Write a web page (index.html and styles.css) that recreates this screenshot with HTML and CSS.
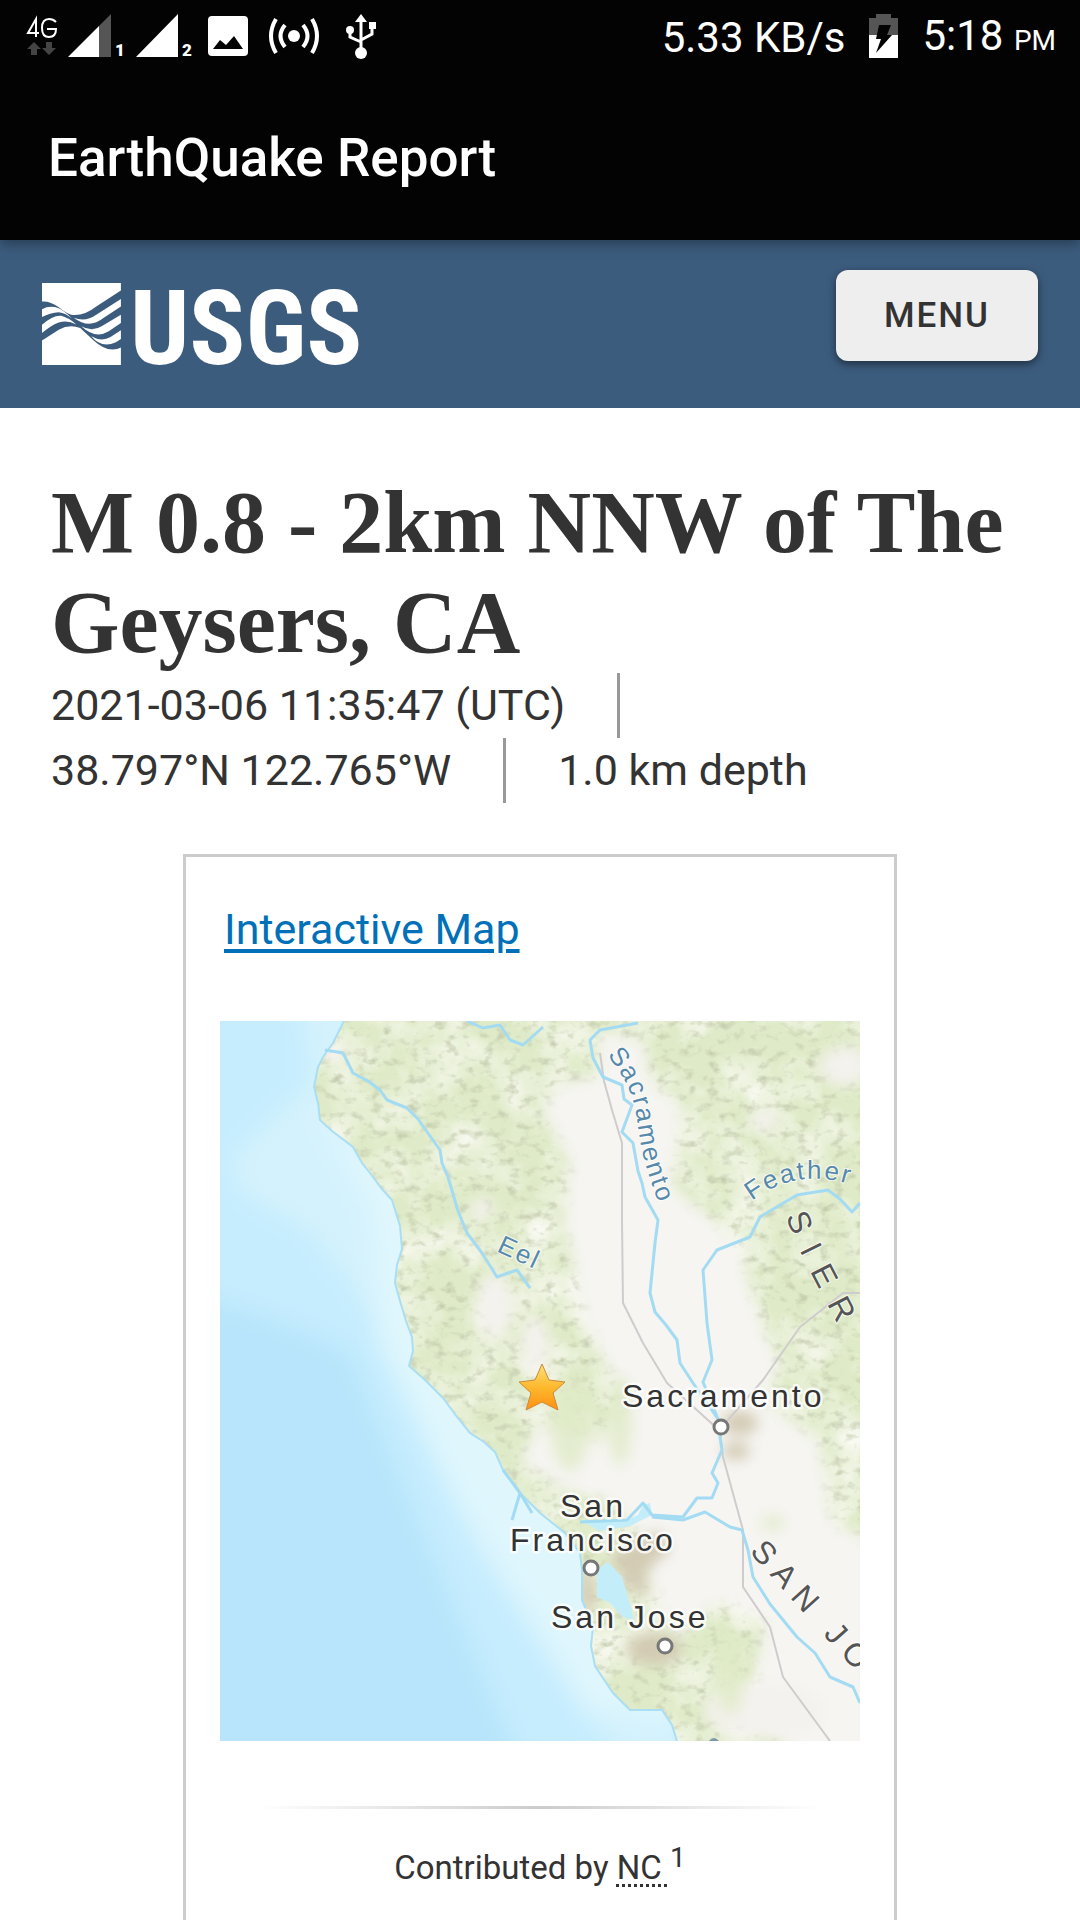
FILE: index.html
```html
<!DOCTYPE html>
<html lang="en">
<head>
<meta charset="utf-8">
<meta name="viewport" content="width=device-width, initial-scale=1">
<title>EarthQuake Report</title>
<link rel="stylesheet" href="styles.css">
</head>
<body>
<div class="app-top">
  <div class="status-bar">
    <div class="status-group">
      <svg class="status-icons" width="380" height="48" viewBox="24 12 380 48" role="img" aria-label="Phone status">
        <g fill="none" stroke="#fff" stroke-width="2">
          <path d="M36 37V19L28 33H39M56 22Q53 19 49 19Q42 19 42 28Q42 37 49 37Q56 37 56 29H47"/>
        </g>
        <path fill="#444" d="M34 42L41 49H37V55H31V49H27ZM49 55L42 48H46V42H52V48H56Z"/>
        <path fill="#555" d="M99 26L111 14V57H99Z"/>
        <path fill="#fff" d="M68 57L99 26V57ZM136 57L178 14V57Z"/>
        <text class="sim" x="115" y="56">1</text>
        <text class="sim" x="182" y="56">2</text>
        <rect x="208" y="16" width="40" height="40" rx="4" fill="#fff"/>
        <path fill="#030303" d="M213 49L220 40L226 45L234 36L243 49Z"/>
        <circle cx="294" cy="36" r="6" fill="#fff"/>
        <path d="M285 25Q276 36 285 47M303 25Q312 36 303 47M276 19Q266 36 276 53M312 19Q322 36 312 53" fill="none" stroke="#fff" stroke-width="4"/>
        <g fill="none" stroke="#fff" stroke-width="3">
          <path d="M361 20V52M350 31V37L361 42M372 27V34L361 40"/>
        </g>
        <path fill="#fff" d="M361 14L367 22H355ZM369 22H376V29H369Z"/>
        <circle cx="350" cy="30" r="4" fill="#fff"/>
        <circle cx="361" cy="53" r="6" fill="#fff"/>
      </svg>
    </div>
    <div class="status-group status-right">
      <span>5.33 KB/s</span>
      <svg width="29" height="44" viewBox="0 0 29 44" role="img" aria-label="Charging">
        <path fill="#555" d="M7 0H22V4H29V21H0V4H7Z"/>
        <path fill="#fff" d="M0 21H29V44H0Z"/>
        <path fill="#030303" d="M10 11H22L18 21H23L7 39L12 25H7Z"/>
      </svg>
      <span>5:18 <small class="meridiem">PM</small></span>
    </div>
  </div>
  <header class="app-bar"><div class="app-title">EarthQuake Report</div></header>
</div>

<div class="site-header">
  <a class="logo" href="#" aria-label="USGS">
    <svg width="340" height="82" viewBox="0 0 340 82">
      <g fill="#fff" transform="scale(.357 .331) translate(-118 -549)">
        <path d="M118 549H339V572L270 620Q235 650 200 645Q185 640 165 622Q140 603 118 605Z"/>
        <path d="M118 628Q140 615 165 625Q180 632 202 656Q185 640 165 637Q140 638 118 652Z"/>
        <path d="M118 675Q150 645 172 648Q195 655 214 674Q190 660 165 668Q145 675 118 700Z"/>
        <path d="M118 723L165 690Q195 672 225 685Q245 705 262 722Q290 750 315 750Q330 750 339 744V797H118Z"/>
        <path d="M339 597V620L290 655Q250 690 207 654Q240 668 270 645Z"/>
        <path d="M339 645V670L305 695Q268 720 228 680Q258 698 285 680Z"/>
        <path d="M339 692V718L325 728Q285 748 256 710Q285 728 310 712Z"/>
      </g>
      <text class="wordmark" x="88" y="81">USGS</text>
    </svg>
  </a>
  <button class="menu-button" type="button">MENU</button>
</div>

<main class="event">
  <h1 class="event-title">M 0.8 - 2km NNW of The Geysers, CA</h1>
  <ul class="event-facts">
    <li>2021-03-06 11:35:47 (UTC)</li>
    <li>38.797°N 122.765°W</li>
    <li>1.0 km depth</li>
  </ul>

  <section class="card">
    <h2 class="card-title"><a href="#">Interactive Map</a></h2>
    <svg class="map" viewBox="0 0 640 720" role="img" aria-label="Map of Northern California with the epicenter">
      <defs>
        <filter id="soft" x="-20%" y="-20%" width="140%" height="140%"><feGaussianBlur stdDeviation="12"/></filter>
        <filter id="shore" x="-20%" y="-20%" width="140%" height="140%"><feGaussianBlur stdDeviation="7"/></filter>
        <filter id="relief" x="0" y="0" width="100%" height="100%">
          <feTurbulence type="fractalNoise" baseFrequency="0.08 0.11" numOctaves="3" seed="8"/>
          <feColorMatrix values="0 0 0 0 .55  0 0 0 0 .60  0 0 0 0 .42  2.6 0 0 0 -1.35" result="n"/>
          <feComposite in="n" in2="SourceGraphic" operator="in"/>
        </filter>
        <filter id="lights" x="0" y="0" width="100%" height="100%">
          <feTurbulence type="fractalNoise" baseFrequency="0.02 0.02" numOctaves="4" seed="21"/>
          <feColorMatrix values="0 0 0 0 .96  0 0 0 0 .96  0 0 0 0 .91  0 2 0 0 -.8" result="n"/>
          <feComposite in="n" in2="SourceGraphic" operator="in"/>
        </filter>
        <linearGradient id="gold" x1="0" y1="0" x2="0" y2="1">
          <stop offset="0" stop-color="#ffe07a"/><stop offset=".5" stop-color="#fdb92e"/><stop offset="1" stop-color="#ff8f12"/>
        </linearGradient>
        <path id="coast" d="M128 -10L123 2L113 22L103 36L98 46L94 66L98 82L100 99L112 110L133 126L142 142L150 152L162 168L172 179L176 192L180 205L182 228L177 244L175 262L180 280L186 300L192 316L193 330L189 345L204 358L223 377L237 396L250 412L264 421L275 431L283 449L300 472L320 492L345 512L360 532L362 549V579L373 606L371 625L375 645L393 672L410 689L442 689L452 704L460 730H650V-10Z"/>
        <clipPath id="land"><use href="#coast"/></clipPath>
        <path id="sacramento-line" d="M387 34C404 55 414 72 418 105C422 140 431 160 442 192"/>
        <path id="feather-line" d="M532 180Q576 146 632 164"/>
        <path id="sierra-line" d="M566 195C576 226 590 250 622 312"/>
        <path id="san-joaquin-line" d="M529 531L700 722"/>
      </defs>
      <rect width="640" height="720" fill="#b8e5fb"/>
      <path filter="url(#soft)" fill="#c6edfe" d="M-30 -30H200V360L420 740H300L200 500L130 330L60 300L-30 270Z"/>
      <path filter="url(#soft)" fill="#d4f2fd" d="M80 -30H200L480 740H400L260 530L160 300L90 210L20 170L10 140L90 60Z"/>
      <path filter="url(#soft)" fill="#dff6fd" d="M90 80L150 190L160 320L240 480L370 690L460 700V400L180 160Z"/>
      <g clip-path="url(#land)">
        <rect width="640" height="720" fill="#dfebc8"/>
        <rect width="640" height="720" filter="url(#lights)"/>
        <rect width="640" height="720" filter="url(#relief)"/>
        <path filter="url(#shore)" fill="#f6f5f2" d="M378 10L425 20L430 60L462 85L452 165L500 205L520 230L540 300L560 345L545 380L600 420L612 500L650 520V740H585L530 690L545 600L500 580L455 620L430 560L420 515L390 480L345 470L300 440L320 400L380 420L405 380L365 300L345 200L350 140L322 90L340 62L380 55Z"/>
        <g filter="url(#shore)" fill="#f4f2ee">
          <ellipse cx="275" cy="285" rx="18" ry="34"/><ellipse cx="315" cy="325" rx="14" ry="30"/><ellipse cx="545" cy="100" rx="15" ry="10"/><ellipse cx="625" cy="45" rx="24" ry="20"/><ellipse cx="115" cy="32" rx="12" ry="8"/><ellipse cx="545" cy="690" rx="60" ry="28"/><ellipse cx="262" cy="188" rx="12" ry="10"/>
        </g>
        <g filter="url(#shore)" fill="#dfeac6" opacity=".8">
          <ellipse cx="350" cy="400" rx="20" ry="50"/><ellipse cx="400" cy="400" rx="12" ry="45"/><ellipse cx="510" cy="650" rx="14" ry="45"/><ellipse cx="553" cy="502" rx="12" ry="8"/>
        </g>
        <g filter="url(#shore)" fill="#d3cbb4">
          <ellipse cx="520" cy="402" rx="18" ry="12"/><ellipse cx="516" cy="430" rx="14" ry="9"/><ellipse cx="367" cy="570" rx="8" ry="24"/><path d="M388 535L440 510L450 530L425 550L430 575L412 572Z"/><ellipse cx="434" cy="628" rx="28" ry="16"/>
        </g>
        <path fill="#c4edfa" d="M377 549L388 541L402 556L412 590L414 600L403 596L390 582L377 576ZM360 499H407L418 494L423 484L430 482L432 494L410 505L380 510Z"/>
      </g>
      <use href="#coast" fill="none" stroke="#a9def5" stroke-width="2"/>
      <g class="road">
        <path d="M380 32L384 60L392 89L402 122V200L403 282L423 322L447 362L500 410L503 436L523 509V566L550 606L563 656L610 720"/>
        <path d="M500 408L543 359L580 306L623 272H640"/>
      </g>
      <g class="river">
        <path d="M105 29L123 32L133 52L148 60L160 69L167 79L187 87L198 98L205 108L220 129L222 142L228 156L238 190L247 212L262 232L277 256L297 249L310 267"/>
        <path d="M247 0L263 7L280 4L290 19L303 24L323 6"/>
        <path d="M418 2L380 9L370 19L373 37L383 56L402 64L404 78L412 84L402 111L413 122L418 150L422 162L425 176L438 199L435 222L430 272L435 291L446 304L457 319L460 342L473 362L498 398L500 416L502 429L492 452L498 462L492 477L477 477L463 496L432 494L423 482L407 499L360 501"/>
        <path d="M640 182L632 191L620 178L608 169L577 174L540 196L530 216L497 229L483 249L487 302L492 339L483 361L498 398"/>
        <path d="M432 496L463 499L485 491L510 506L522 509L528 529L533 556L550 583L577 616L595 632L610 656L633 666L640 682"/>
        <path d="M283 449L300 472L292 499M300 472L312 492"/>
      </g>
      <g class="water-label">
        <text><textPath href="#sacramento-line">Sacramento</textPath></text>
        <text><textPath href="#feather-line">Feather</textPath></text>
        <text transform="translate(276 230) rotate(25)">Eel</text>
      </g>
      <g class="range-label">
        <text class="sierra"><textPath href="#sierra-line">SIER</textPath></text>
        <text><textPath href="#san-joaquin-line">SAN JO</textPath></text>
      </g>
      <g class="city-label">
        <text x="402" y="386">Sacramento</text>
        <text x="340" y="496">San</text>
        <text x="290" y="530">Francisco</text>
        <text x="331" y="607">San Jose</text>
      </g>
      <g fill="#fff" stroke="#777" stroke-width="3">
        <circle cx="501" cy="406" r="7"/><circle cx="371" cy="547" r="7"/><circle cx="445" cy="625" r="7"/>
      </g>
      <path d="M489 720Q494 714 499 720Z" fill="#7e9aaa"/>
      <path fill="url(#gold)" stroke="#c98a3a" stroke-width="1" stroke-linejoin="round" d="M322 343L329 359L345 361L333 372L338 389L322 381L306 389L311 372L299 361L315 359Z"/>
    </svg>
    <hr class="divider">
    <p class="credit">Contributed by <abbr title="Northern California">NC </abbr><sup>1</sup></p>
  </section>
</main>
</body>
</html>
```
FILE: styles.css
```css
* {
  box-sizing: border-box;
}

body {
  margin: 0;
  min-height: 100vh;
  display: flex;
  flex-direction: column;
  background: #fff;
  color: #333;
  font-family: Roboto, "Liberation Sans", sans-serif;
  font-size: 43px;
  line-height: 65px;
}

.app-top {
  position: relative;
  background: #030303;
  color: #fff;
  box-shadow: 0 4px 12px rgba(0, 0, 0, 0.35);
}

.status-bar {
  height: 72px;
  padding: 0 24px;
  display: flex;
  align-items: center;
  justify-content: space-between;
  font-size: 42px;
}

.status-group {
  display: flex;
  align-items: center;
}

.status-right {
  gap: 24px;
}

.status-right span {
  line-height: 48px;
  padding-top: 4px;
}

.meridiem {
  font-size: 28px;
}

.sim {
  fill: #fff;
  font-size: 17px;
  font-weight: 900;
}

.app-bar {
  height: 168px;
  padding: 54px 48px;
  display: flex;
}

.app-title {
  font-size: 53px;
  font-weight: 500;
  line-height: 64px;
}

.site-header {
  background: #3c5c7e;
  height: 168px;
  padding: 30px 42px 47px;
  display: flex;
  align-items: center;
  justify-content: space-between;
}

.logo {
  display: block;
  padding-top: 17px;
}

.logo svg {
  display: block;
}

.wordmark {
  fill: #fff;
  font-family: "Liberation Sans Narrow", "Roboto Condensed", "Liberation Sans", sans-serif;
  font-size: 104px;
  font-weight: 700;
}

.menu-button {
  height: 91px;
  padding: 0 48px;
  border: 0;
  border-radius: 12px;
  background: #eee;
  color: #333;
  font: 500 35px/91px Roboto, "Liberation Sans", sans-serif;
  letter-spacing: 2px;
  box-shadow: 0 3px 8px rgba(0, 0, 0, 0.5);
}

.event {
  flex: 1;
  display: flex;
  flex-direction: column;
  padding: 65px 51px 0;
}

.event-title {
  margin: 0;
  font-family: "Liberation Serif", serif;
  font-size: 88px;
  font-weight: 700;
  line-height: 100px;
}

.event-facts {
  list-style: none;
  margin: 0 0 51px;
  padding: 0;
  display: flex;
  flex-wrap: wrap;
  column-gap: 52px;
}

.event-facts li:not(:last-child) {
  padding-right: 52px;
  border-right: 3px solid #999;
}

.card {
  flex: 1;
  width: 100%;
  max-width: 714px;
  margin: 0 auto;
  padding: 40px 34px 0;
  border: 3px solid #ccc;
  border-bottom: 0;
}

.card-title {
  margin: 0 4px 59px;
  font-size: 43px;
  font-weight: 400;
  line-height: 65px;
}

.card-title a {
  color: #0071b8;
  text-underline-offset: 5px;
  text-decoration-thickness: 4px;
}

.map {
  display: block;
  width: 100%;
  height: auto;
}

.road path,
.river path {
  fill: none;
  stroke: #cfcccd;
  stroke-width: 2;
  stroke-linejoin: round;
}

.river path {
  stroke: #a3dbf2;
  stroke-width: 3;
}

.water-label,
.range-label,
.city-label {
  font-family: "Liberation Sans", sans-serif;
  font-size: 32px;
  paint-order: stroke;
  stroke: rgba(255, 255, 255, 0.8);
  stroke-width: 5;
  stroke-linejoin: round;
}

.water-label {
  fill: #5689aa;
  font-size: 26px;
  letter-spacing: 2px;
  stroke-width: 2;
}

.range-label {
  fill: #555;
  letter-spacing: 9px;
  stroke-width: 2;
}

.sierra {
  letter-spacing: 15px;
}

.city-label {
  fill: #333;
  letter-spacing: 3px;
}

.divider {
  height: 3px;
  margin: 65px 38px 33px;
  border: 0;
  background: linear-gradient(to right, transparent, #ccc 50%, transparent);
}

.credit {
  margin: 0;
  font-size: 33px;
  line-height: 52px;
  text-align: center;
}

.credit abbr {
  text-decoration: underline dotted 3px;
  text-underline-offset: 5px;
  white-space: pre;
}

.credit sup {
  font-size: 28px;
  line-height: 0;
}
```
